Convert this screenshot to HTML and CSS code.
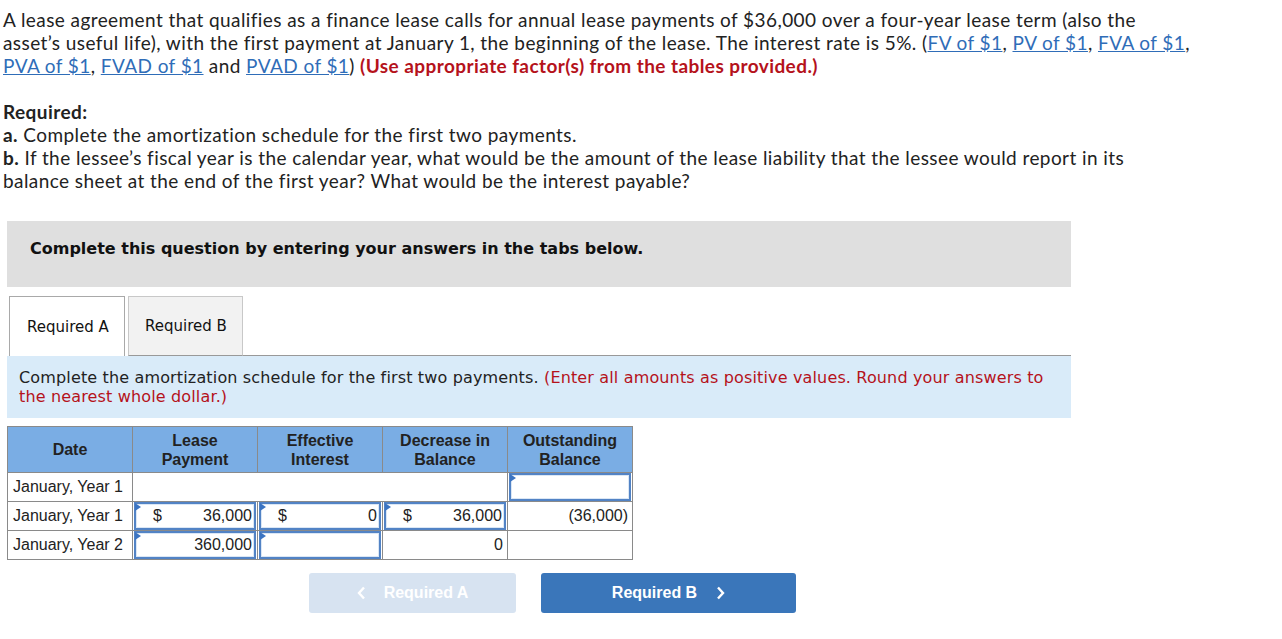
FILE: index.html
```html
<!DOCTYPE html>
<html>
<head>
<meta charset="utf-8">
<link rel="stylesheet" href="styles.css">
</head>
<body>
<div class="page">
  <p class="intro">A lease agreement that qualifies as a finance lease calls for annual lease payments of $36,000 over a four-year lease term (also the<br>asset’s useful life), with the first payment at January 1, the beginning of the lease. The interest rate is 5%. (<a href="#">FV of $1</a>, <a href="#">PV of $1</a>, <a href="#">FVA of $1</a>,<br><a href="#">PVA of $1</a>, <a href="#">FVAD of $1</a> and <a href="#">PVAD of $1</a>) <span class="warn">(Use appropriate factor(s) from the tables provided.)</span></p>
  <div class="req">
    <div class="req-title">Required:</div>
    <div><b>a.</b> Complete the amortization schedule for the first two payments.</div>
    <div><b>b.</b> If the lessee’s fiscal year is the calendar year, what would be the amount of the lease liability that the lessee would report in its<br>balance sheet at the end of the first year? What would be the interest payable?</div>
  </div>

  <div class="notice">Complete this question by entering your answers in the tabs below.</div>

  <div class="tabs">
    <div class="tab active">Required A</div>
    <div class="tab">Required B</div>
    <div class="tab-fill"></div>
  </div>
  <div class="instr">Complete the amortization schedule for the first two payments. <span class="instr-red">(Enter all amounts as positive values. Round your answers to<br>the nearest whole dollar.)</span></div>

  <table class="sched">
    <thead>
      <tr>
        <th>Date</th>
        <th>Lease<br>Payment</th>
        <th>Effective<br>Interest</th>
        <th>Decrease in<br>Balance</th>
        <th>Outstanding<br>Balance</th>
      </tr>
    </thead>
    <tbody>
      <tr>
        <td class="date">January, Year 1</td>
        <td colspan="3"></td>
        <td class="in"><div class="inp"></div></td>
      </tr>
      <tr>
        <td class="date">January, Year 1</td>
        <td class="in"><div class="inp"><span class="cur">$</span><span class="val">36,000</span></div></td>
        <td class="in"><div class="inp"><span class="cur">$</span><span class="val">0</span></div></td>
        <td class="in"><div class="inp"><span class="cur">$</span><span class="val">36,000</span></div></td>
        <td class="num">(36,000)</td>
      </tr>
      <tr>
        <td class="date">January, Year 2</td>
        <td class="in"><div class="inp"><span class="val">360,000</span></div></td>
        <td class="in"><div class="inp"></div></td>
        <td class="num">0</td>
        <td></td>
      </tr>
    </tbody>
  </table>

  <div class="nav">
    <button class="btn prev"><svg class="chev left" width="9" height="14" viewBox="0 0 9 14"><path d="M7 1.5 L2 7 L7 12.5" fill="none" stroke="#fff" stroke-width="2.4"/></svg>Required A</button>
    <button class="btn next">Required B<svg class="chev right" width="9" height="14" viewBox="0 0 9 14"><path d="M2 1.5 L7 7 L2 12.5" fill="none" stroke="#fff" stroke-width="2.4"/></svg></button>
  </div>
</div>
</body>
</html>
```

FILE: styles.css
```css
html, body {
  margin: 0;
  padding: 0;
  background: #fff;
}
.page {
  padding: 8px 3px 0 3px;
  width: 1200px;
}
.intro, .req {
  font-family: "Lato", "Liberation Sans", sans-serif;
  font-size: 19px;
  letter-spacing: 0.42px;
  font-variant-ligatures: none;
  line-height: 23px;
  color: #222;
  margin: 0;
}
.intro a {
  color: #2f6db8;
  text-decoration: underline;
}
.warn {
  color: #b5121b;
  font-weight: bold;
}
.req {
  margin-top: 23px;
}
.req-title {
  font-weight: bold;
}
.notice {
  margin: 29px 0 0 4px;
  width: 1064px;
  height: 66px;
  box-sizing: border-box;
  padding: 17px 0 0 23px;
  background: #dfdfdf;
  font-family: "DejaVu Sans", Verdana, sans-serif;
  font-weight: bold;
  font-size: 16px;
  line-height: 22px;
  color: #111;
}
.tabs {
  display: flex;
  margin: 9px 0 0 4px;
  width: 1064px;
  height: 60px;
  box-sizing: border-box;
  padding-left: 2px;
  gap: 3px;
}
.tab {
  box-sizing: border-box;
  height: 60px;
  padding: 0 0 0 16px;
  display: flex;
  align-items: center;
  font-family: "DejaVu Sans", Verdana, sans-serif;
  font-size: 15px;
  color: #111;
  background: #f2f2f2;
  border: 1px solid #c8c8c8;
  border-bottom: 1px solid #999;
  width: 115px;
}
.tab.active {
  background: #fff;
  border: 1px solid #a9a9a9;
  border-bottom: none;
  width: 116px;
  padding-left: 17px;
}
.tab-fill {
  flex: 1;
  border-bottom: 1px solid #999;
  margin-left: -3px;
}
.instr {
  margin-left: 4px;
  width: 1064px;
  box-sizing: border-box;
  padding: 12px 12px 11px 12px;
  background: #d9ebf9;
  font-family: "DejaVu Sans", Verdana, sans-serif;
  font-size: 16px;
  letter-spacing: 0.15px;
  line-height: 19px;
  color: #222;
  height: 62px;
}
.instr-red {
  color: #b5121b;
}
.sched {
  margin: 8px 0 0 4px;
  border-collapse: collapse;
  font-family: "Liberation Sans", Arial, sans-serif;
  font-size: 16px;
  color: #222;
  table-layout: fixed;
  width: 626px;
}
.sched th {
  background: #7aade4;
  border: 1px solid #8a8a8a;
  font-weight: bold;
  font-size: 16px;
  line-height: 19px;
  height: 45px;
  padding: 0;
  color: #222;
}
.sched td {
  border: 1px solid #8a8a8a;
  height: 28px;
  padding: 0;
}
.sched td.date {
  padding-left: 5px;
  white-space: nowrap;
}
.sched td.num {
  text-align: right;
  padding-right: 4px;
}
.inp {
  position: relative;
  box-sizing: border-box;
  height: 28px;
  margin: 0 1px;
  border: 2px solid #5283c5;
  box-shadow: inset 0 0 0 1px #dbe7f5;
  background: #fff;
  display: flex;
  align-items: center;
  padding: 0 2px 0 17px;
}
.inp::before {
  content: "";
  position: absolute;
  left: -1px;
  top: -1px;
  border-left: 6px solid #3b74c2;
  border-top: 4px solid transparent;
  border-bottom: 4px solid transparent;
}
.cur {
  flex: none;
}
.val {
  flex: 1;
  text-align: right;
}
.nav {
  display: flex;
  gap: 25px;
  margin: 13px 0 0 306px;
}
.btn {
  height: 40px;
  border: none;
  border-radius: 3px;
  font-family: "Liberation Sans", Arial, sans-serif;
  font-weight: bold;
  font-size: 16px;
  color: #fff;
  display: flex;
  align-items: center;
  justify-content: center;
  padding: 0;
}
.btn.prev {
  width: 207px;
  background: #d7e3f1;
}
.btn.next {
  width: 255px;
  background: #3a76ba;
}
.chev.left {
  margin-right: 18px;
}
.chev.right {
  margin-left: 19px;
}
```
